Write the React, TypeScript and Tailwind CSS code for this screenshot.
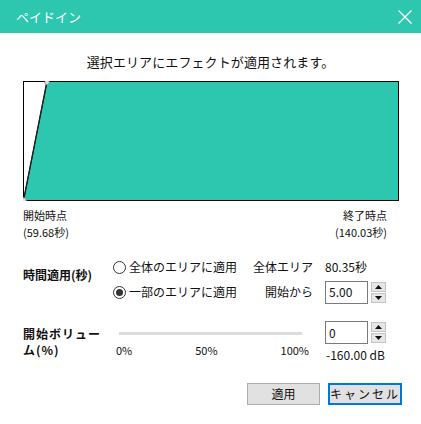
import React from "react";

const F = { fontFamily: '"Noto Sans CJK JP", "Noto Sans", sans-serif' };

function Radio({ checked }: { checked?: boolean }) {
  return (
    <span className="flex h-[13px] w-[13px] items-center justify-center rounded-full border border-[#333] bg-white">
      {checked && <span className="h-[7px] w-[7px] rounded-full bg-[#333]" />}
    </span>
  );
}

function Spinner() {
  return (
    <div className="ml-[3px] flex w-[15px] flex-col gap-[1px]">
      <div className="flex h-[10px] items-center justify-center border border-[#c4c4c4] bg-[#e6e6e6]">
        <svg width="7" height="4" viewBox="0 0 7 4"><path d="M0 4 L3.5 0 L7 4 Z" fill="#111" /></svg>
      </div>
      <div className="flex h-[10px] items-center justify-center border border-[#c4c4c4] bg-[#e6e6e6]">
        <svg width="7" height="4" viewBox="0 0 7 4"><path d="M0 0 L3.5 4 L7 0 Z" fill="#111" /></svg>
      </div>
    </div>
  );
}

function NumInput({ value }: { value: string }) {
  return (
    <div className="flex items-start">
      <div className="flex h-[23px] w-[43px] items-center border border-[#7a7a7a] bg-white pl-[3px] text-[12px] leading-none text-[#111]">
        {value}
      </div>
      <div className="pt-[1px]">
        <Spinner />
      </div>
    </div>
  );
}

export default function App() {
  return (
    <div className="h-[424px] w-[421px] bg-white text-[#111]" style={F}>
      <div className="flex h-[33px] items-center justify-between bg-[#2dc6ae] pl-[16px] pr-[9px]">
        <span className="text-[13px] text-white">ペイドイン</span>
        <svg width="14" height="14" viewBox="0 0 14 14">
          <path d="M0.5 0.5 L13.5 13.5 M13.5 0.5 L0.5 13.5" stroke="#fff" strokeWidth="1.3" />
        </svg>
      </div>

      <div className="px-[23px]">
        <div className="pt-[20px] text-center text-[13px] leading-[18px] tracking-[0.1px]">
          選択エリアにエフェクトが適用されます。
        </div>

        <div className="mt-[10px] h-[120px] w-[376px]">
          <svg width="376" height="120" viewBox="0 0 376 120" className="block">
            <rect x="0.5" y="0.5" width="375" height="119" fill="#fff" stroke="#000" />
            <polygon points="0.5,119.5 24,0.5 375.5,0.5 375.5,119.5" fill="#2dc6ae" stroke="#000" strokeWidth="1" />
            <line x1="0.5" y1="119.5" x2="24" y2="0.5" stroke="#222" strokeWidth="1.3" />
            <circle cx="24" cy="1.5" r="2.3" fill="#ddd" stroke="#888" strokeWidth="0.8" />
            <circle cx="1" cy="119" r="2.3" fill="#ddd" stroke="#888" strokeWidth="0.8" />
          </svg>
        </div>

        <div className="mt-[6px] flex w-[376px] justify-between pr-[12px] text-[11px] leading-[17px]">
          <div>
            <div>開始時点</div>
            <div>(59.68秒)</div>
          </div>
          <div className="text-right">
            <div>終了時点</div>
            <div>(140.03秒)</div>
          </div>
        </div>

        <div className="mt-[14px] flex">
          <div className="w-[90px] pt-[12px] text-[12px] font-bold leading-[16px]">時間適用(秒)</div>
          <div className="flex flex-col gap-[1px]">
            <div className="flex h-[24px] items-center">
              <div className="flex w-[142px] items-center gap-[3px] text-[12px]">
                <Radio />
                <span>全体のエリアに適用</span>
              </div>
              <div className="flex w-[58px] justify-end whitespace-nowrap text-[12px]">全体エリア</div>
              <div className="ml-[12px] text-[12px]">80.35秒</div>
            </div>
            <div className="flex h-[24px] items-center">
              <div className="flex w-[142px] items-center gap-[3px] text-[12px]">
                <Radio checked />
                <span>一部のエリアに適用</span>
              </div>
              <div className="flex w-[58px] justify-end whitespace-nowrap text-[12px]">開始から</div>
              <div className="ml-[12px]">
                <NumInput value="5.00" />
              </div>
            </div>
          </div>
        </div>

        <div className="mt-[17px] flex">
          <div className="w-[90px] pt-[5px] text-[12px] font-bold leading-[16px] tracking-[1px]">
            <div>開始ボリュー</div>
            <div>ム(%)</div>
          </div>
          <div className="w-[200px] pt-[11px]">
            <div className="ml-[6px] h-[3px] w-[183px] bg-[#dcdcdc]" />
            <div className="mt-[7px] flex w-[196px] justify-between pl-[3px] text-[11px] leading-[16px]">
              <span>0%</span>
              <span>50%</span>
              <span>100%</span>
            </div>
          </div>
          <div className="ml-[12px]">
            <NumInput value="0" />
            <div className="mt-[3px] pl-[1px] text-[12px] leading-[16px]">-160.00 dB</div>
          </div>
        </div>

        <div className="mt-[20px] flex justify-end gap-[8px]">
          <button className="flex h-[22px] w-[73px] items-center justify-center border border-[#adadad] bg-[#e1e1e1] text-[12px]">
            適用
          </button>
          <button className="-mr-[4px] flex h-[22px] w-[74px] items-center justify-center border-2 border-[#0078d7] bg-[#e1e1e1] text-[12px] tracking-[2px]">
            キャンセル
          </button>
        </div>
      </div>
    </div>
  );
}
